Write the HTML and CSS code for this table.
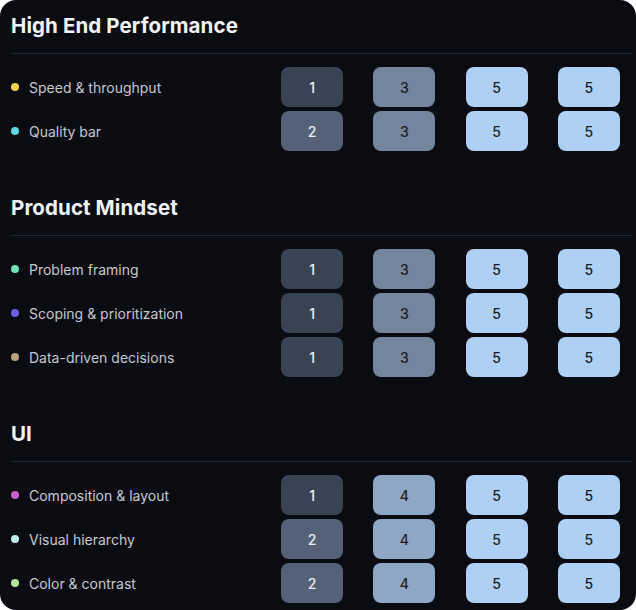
FILE: index.html
```html
<!DOCTYPE html>
<html>
<head>
<meta charset="utf-8">
<link rel="stylesheet" href="styles.css">
</head>
<body>
<div class="card">
  <section class="section">
    <h2 class="title">High End Performance</h2>
    <div class="rule"></div>
    <div class="rows">
      <div class="row"><div class="label"><span class="dot d-yellow"></span>Speed &amp; throughput</div><div class="cell"><span class="v v1">1</span></div><div class="cell"><span class="v v3">3</span></div><div class="cell"><span class="v v5">5</span></div><div class="cell"><span class="v v5">5</span></div></div>
      <div class="row"><div class="label"><span class="dot d-cyan"></span>Quality bar</div><div class="cell"><span class="v v2">2</span></div><div class="cell"><span class="v v3">3</span></div><div class="cell"><span class="v v5">5</span></div><div class="cell"><span class="v v5">5</span></div></div>
    </div>
  </section>
  <section class="section">
    <h2 class="title">Product Mindset</h2>
    <div class="rule"></div>
    <div class="rows">
      <div class="row"><div class="label"><span class="dot d-mint"></span>Problem framing</div><div class="cell"><span class="v v1">1</span></div><div class="cell"><span class="v v3">3</span></div><div class="cell"><span class="v v5">5</span></div><div class="cell"><span class="v v5">5</span></div></div>
      <div class="row"><div class="label"><span class="dot d-purple"></span>Scoping &amp; prioritization</div><div class="cell"><span class="v v1">1</span></div><div class="cell"><span class="v v3">3</span></div><div class="cell"><span class="v v5">5</span></div><div class="cell"><span class="v v5">5</span></div></div>
      <div class="row"><div class="label"><span class="dot d-tan"></span>Data-driven decisions</div><div class="cell"><span class="v v1">1</span></div><div class="cell"><span class="v v3">3</span></div><div class="cell"><span class="v v5">5</span></div><div class="cell"><span class="v v5">5</span></div></div>
    </div>
  </section>
  <section class="section">
    <h2 class="title">UI</h2>
    <div class="rule"></div>
    <div class="rows">
      <div class="row"><div class="label"><span class="dot d-pink"></span>Composition &amp; layout</div><div class="cell"><span class="v v1">1</span></div><div class="cell"><span class="v v4">4</span></div><div class="cell"><span class="v v5">5</span></div><div class="cell"><span class="v v5">5</span></div></div>
      <div class="row"><div class="label"><span class="dot d-ice"></span>Visual hierarchy</div><div class="cell"><span class="v v2">2</span></div><div class="cell"><span class="v v4">4</span></div><div class="cell"><span class="v v5">5</span></div><div class="cell"><span class="v v5">5</span></div></div>
      <div class="row"><div class="label"><span class="dot d-lime"></span>Color &amp; contrast</div><div class="cell"><span class="v v2">2</span></div><div class="cell"><span class="v v4">4</span></div><div class="cell"><span class="v v5">5</span></div><div class="cell"><span class="v v5">5</span></div></div>
    </div>
  </section>
</div>
</body>
</html>
```
FILE: styles.css
```css
* { box-sizing: border-box; }
html, body { margin: 0; padding: 0; background: #ffffff; }
body { font-family: Inter, "Noto Sans", sans-serif; }
.card {
  width: 636px;
  height: 610px;
  background: #0b0c12;
  border-radius: 16px;
  padding: 12px 1px 7px 11px;
  display: flex;
  flex-direction: column;
  gap: 43px;
  overflow: hidden;
}
.title {
  margin: 0;
  font-size: 20.5px;
  line-height: 28px;
  font-weight: 700;
  color: #f1f2f5;
  letter-spacing: 0.1px;
}
.rule {
  height: 1px;
  background: #24262f;
  margin: 13px 3px 13px 0;
}
.rows { display: flex; flex-direction: column; gap: 4px; }
.row {
  display: grid;
  grid-template-columns: 255px repeat(4, 1fr);
  align-items: center;
  height: 40px;
}
.label {
  display: flex;
  align-items: center;
  gap: 10px;
  font-size: 14px;
  color: #c6c8cf;
  font-weight: 400;
}
.dot { width: 8px; height: 8px; border-radius: 50%; flex: none; }
.d-yellow { background: #f0d44c; }
.d-cyan { background: #5fd9e1; }
.d-mint { background: #72e3b9; }
.d-purple { background: #6d5de6; }
.d-tan { background: #baa27e; }
.d-pink { background: #c860c8; }
.d-ice { background: #bcecef; }
.d-lime { background: #b2e89a; }
.cell { display: flex; justify-content: center; }
.v {
  width: 62px;
  height: 40px;
  border-radius: 8px;
  display: flex;
  align-items: center;
  justify-content: center;
  font-size: 14px;
  font-weight: 500;
}
.v1 { background: #3a4353; color: #eceff3; }
.v2 { background: #546178; color: #eceff3; }
.v3 { background: #7585a0; color: #1a1d24; }
.v4 { background: #8fa7c7; color: #1a1d24; }
.v5 { background: #afd0f5; color: #1a1d24; }
```
